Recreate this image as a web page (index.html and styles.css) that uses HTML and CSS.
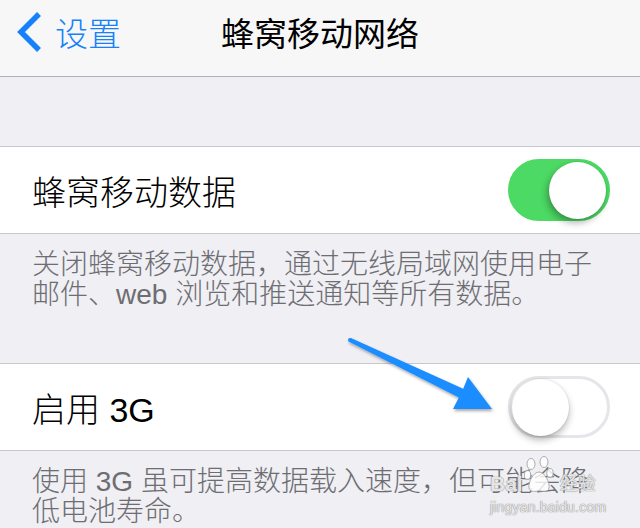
FILE: index.html
```html
<!DOCTYPE html>
<html lang="zh-CN">
<head>
    <meta charset="UTF-8">
    <title>蜂窝移动网络</title>
    <meta name="viewport" content="width=device-width, initial-scale=1.0">
    <link rel="stylesheet" href="styles.css">
</head>
<body>
    <div class="screen">
        <header class="navbar">
            <a class="back" href="#">
                <svg class="chevron" width="24" height="40" viewBox="0 0 24 40">
                    <polyline points="22,2 4,20 22,38" />
                </svg>
                <span>设置</span>
            </a>
            <h1 class="title">蜂窝移动网络</h1>
        </header>

        <div class="spacer"></div>

        <div class="group">
            <div class="cell">
                <span class="cell-label">蜂窝移动数据</span>
                <div class="switch on"><span class="knob"></span></div>
            </div>
        </div>
        <p class="footer">关闭蜂窝移动数据，通过无线局域网使用电子邮件、web 浏览和推送通知等所有数据。</p>

        <div class="group">
            <div class="cell">
                <span class="cell-label">启用 3G</span>
                <div class="switch"><span class="knob"></span></div>
            </div>
        </div>
        <p class="footer">使用 3G 虽可提高数据载入速度，但可能会降低电池寿命。</p>

        <!-- annotation arrow drawn over the screenshot -->
        <svg class="arrow" width="640" height="528" viewBox="0 0 640 528">
            <defs>
                <filter id="arrowShadow" x="-10%" y="-10%" width="130%" height="140%">
                    <feDropShadow dx="1" dy="2" stdDeviation="1.5" flood-color="#000" flood-opacity="0.35" />
                </filter>
            </defs>
            <g filter="url(#arrowShadow)" fill="#1b8dff">
                <circle cx="350" cy="340" r="2" />
                <polygon points="350.9,338.1 463.2,388.7 468,377 492,409 453,409 458.8,397.5 349.1,341.8" />
            </g>
        </svg>

        <div class="watermark">
            <div class="wm-logo">
                <span class="wm-bai">Bai</span>
                <svg class="wm-paw" width="30" height="38" viewBox="0 0 30 38">
                    <ellipse cx="7" cy="8" rx="4" ry="5.5" />
                    <ellipse cx="20" cy="6" rx="4" ry="5.5" />
                    <ellipse cx="3.5" cy="19" rx="3.2" ry="4.5" />
                    <ellipse cx="26" cy="17" rx="3.2" ry="4.5" />
                    <path d="M15 16 C9 16 4 27 5 32 C6 37 12 35 15 35 C18 35 24 37 25 32 C26 27 21 16 15 16 Z" />
                </svg>
                <span class="wm-jy">经验</span>
            </div>
            <div class="wm-url">jingyan.baidu.com</div>
        </div>
    </div>
</body>
</html>
```

FILE: styles.css
```css
body {
    margin: 0;
    padding: 0;
    background: #efeff4;
    font-family: "Liberation Sans", "Noto Sans CJK SC", sans-serif;
}
.screen {
    position: relative;
    width: 640px;
    height: 528px;
    overflow: hidden;
    background: #efeff4;
}
.navbar {
    display: grid;
    grid-template-columns: 1fr auto 1fr;
    align-items: center;
    height: 64px;
    padding-bottom: 12px;
    background: #f7f7f7;
    border-bottom: 1px solid #b2b2b2;
}
.back {
    display: flex;
    align-items: center;
    gap: 14px;
    padding-left: 17px;
    color: #1581fb;
    text-decoration: none;
    font-size: 33px;
    font-weight: 300;
}
.chevron polyline {
    fill: none;
    stroke: #1581fb;
    stroke-width: 5.5;
    stroke-linejoin: miter;
}
.title {
    margin: 0;
    font-size: 33px;
    font-weight: 400;
    color: #000;
}
.spacer {
    height: 69px;
}
.group {
    background: #fff;
    border-top: 1px solid #c8c7cc;
    border-bottom: 1px solid #c8c7cc;
}
.cell {
    display: flex;
    align-items: center;
    justify-content: space-between;
    height: 86px;
    padding: 0 30px 0 32px;
}
.cell-label {
    font-size: 34px;
    font-weight: 300;
    color: #000;
}
.switch {
    display: flex;
    align-items: center;
    box-sizing: border-box;
    width: 102px;
    height: 62px;
    padding: 0 1px;
    border-radius: 31px;
    border: 3px solid #e5e5ea;
    background: #fff;
}
.switch.on {
    justify-content: flex-end;
    border-color: #4cd964;
    background: #4cd964;
}
.knob {
    width: 57px;
    height: 57px;
    border-radius: 50%;
    background: #fff;
    box-shadow: 0 0 0 1px rgba(0,0,0,0.05), 0 4px 7px rgba(0,0,0,0.28);
}
.switch.on .knob {
    box-shadow: 0 0 0 1px rgba(0,0,0,0.04), -2px 4px 7px rgba(0,0,0,0.3);
}
.footer {
    margin: 0;
    padding: 16px 40px 53px 32px;
    font-size: 28px;
    font-weight: 300;
    line-height: 30px;
    color: #6d6d72;
}
.arrow {
    position: absolute;
    left: 0;
    top: 0;
    pointer-events: none;
}
.watermark {
    position: absolute;
    left: 490px;
    top: 456px;
    width: 118px;
    color: rgba(255,255,255,0.8);
    text-shadow: 0 0 1px #8a8a8a, 0 0 1px #8a8a8a;
}
.wm-logo {
    display: flex;
    align-items: flex-end;
    height: 38px;
}
.wm-bai {
    font-size: 21px;
    font-weight: bold;
    line-height: 21px;
}
.wm-paw {
    margin: 0 6px 0 1px;
}
.wm-paw ellipse, .wm-paw path {
    fill: rgba(255,255,255,0.8);
    stroke: #9a9a9a;
    stroke-width: 0.8;
}
.wm-jy {
    font-size: 18px;
    line-height: 20px;
}
.wm-url {
    margin-top: 5px;
    font-size: 14px;
    line-height: 16px;
    letter-spacing: 0.2px;
}
```
